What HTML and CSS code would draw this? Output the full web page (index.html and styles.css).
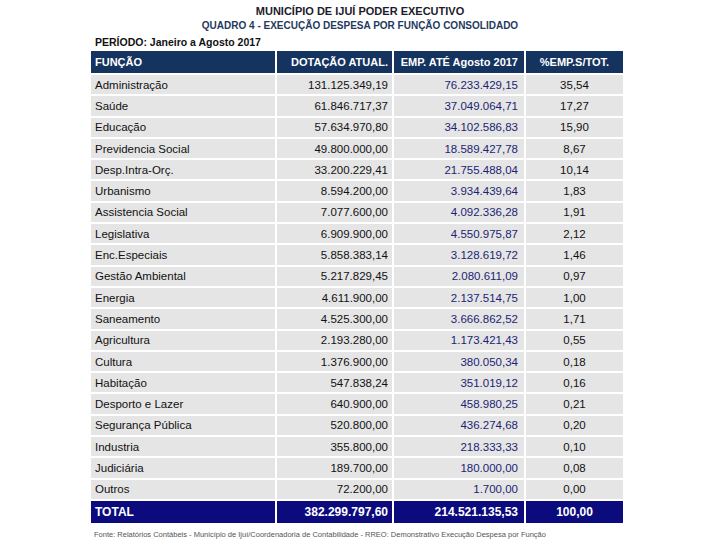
FILE: index.html
```html
<!DOCTYPE html>
<html lang="pt">
<head>
<meta charset="utf-8">
<link rel="stylesheet" href="styles.css">
</head>
<body>
<div class="page">
  <div class="title">MUNICÍPIO DE IJUÍ PODER EXECUTIVO</div>
  <div class="subtitle">QUADRO 4 - EXECUÇÃO DESPESA POR FUNÇÃO CONSOLIDADO</div>
  <div class="period">PERÍODO: Janeiro a Agosto 2017</div>
  <table class="grid">
    <thead>
      <tr><th class="c1">FUNÇÃO</th><th class="c2">DOTAÇÃO ATUAL.</th><th class="c3">EMP. ATÉ Agosto 2017</th><th class="c4">%EMP.S/TOT.</th></tr>
    </thead>
    <tbody>
      <tr><td class="c1">Administração</td><td class="c2">131.125.349,19</td><td class="c3">76.233.429,15</td><td class="c4">35,54</td></tr>
      <tr><td class="c1">Saúde</td><td class="c2">61.846.717,37</td><td class="c3">37.049.064,71</td><td class="c4">17,27</td></tr>
      <tr><td class="c1">Educação</td><td class="c2">57.634.970,80</td><td class="c3">34.102.586,83</td><td class="c4">15,90</td></tr>
      <tr><td class="c1">Previdencia Social</td><td class="c2">49.800.000,00</td><td class="c3">18.589.427,78</td><td class="c4">8,67</td></tr>
      <tr><td class="c1">Desp.Intra-Orç.</td><td class="c2">33.200.229,41</td><td class="c3">21.755.488,04</td><td class="c4">10,14</td></tr>
      <tr><td class="c1">Urbanismo</td><td class="c2">8.594.200,00</td><td class="c3">3.934.439,64</td><td class="c4">1,83</td></tr>
      <tr><td class="c1">Assistencia Social</td><td class="c2">7.077.600,00</td><td class="c3">4.092.336,28</td><td class="c4">1,91</td></tr>
      <tr><td class="c1">Legislativa</td><td class="c2">6.909.900,00</td><td class="c3">4.550.975,87</td><td class="c4">2,12</td></tr>
      <tr><td class="c1">Enc.Especiais</td><td class="c2">5.858.383,14</td><td class="c3">3.128.619,72</td><td class="c4">1,46</td></tr>
      <tr><td class="c1">Gestão Ambiental</td><td class="c2">5.217.829,45</td><td class="c3">2.080.611,09</td><td class="c4">0,97</td></tr>
      <tr><td class="c1">Energia</td><td class="c2">4.611.900,00</td><td class="c3">2.137.514,75</td><td class="c4">1,00</td></tr>
      <tr><td class="c1">Saneamento</td><td class="c2">4.525.300,00</td><td class="c3">3.666.862,52</td><td class="c4">1,71</td></tr>
      <tr><td class="c1">Agricultura</td><td class="c2">2.193.280,00</td><td class="c3">1.173.421,43</td><td class="c4">0,55</td></tr>
      <tr><td class="c1">Cultura</td><td class="c2">1.376.900,00</td><td class="c3">380.050,34</td><td class="c4">0,18</td></tr>
      <tr><td class="c1">Habitação</td><td class="c2">547.838,24</td><td class="c3">351.019,12</td><td class="c4">0,16</td></tr>
      <tr><td class="c1">Desporto e Lazer</td><td class="c2">640.900,00</td><td class="c3">458.980,25</td><td class="c4">0,21</td></tr>
      <tr><td class="c1">Segurança Pública</td><td class="c2">520.800,00</td><td class="c3">436.274,68</td><td class="c4">0,20</td></tr>
      <tr><td class="c1">Industria</td><td class="c2">355.800,00</td><td class="c3">218.333,33</td><td class="c4">0,10</td></tr>
      <tr><td class="c1">Judiciária</td><td class="c2">189.700,00</td><td class="c3">180.000,00</td><td class="c4">0,08</td></tr>
      <tr><td class="c1">Outros</td><td class="c2">72.200,00</td><td class="c3">1.700,00</td><td class="c4">0,00</td></tr>
    </tbody>
    <tfoot>
      <tr><td class="c1">TOTAL</td><td class="c2">382.299.797,60</td><td class="c3">214.521.135,53</td><td class="c4">100,00</td></tr>
    </tfoot>
  </table>
  <div class="source">Fonte: Relatórios Contábeis - Município de Ijuí/Coordenadoria de Contabilidade - RREO: Demonstrativo Execução Despesa por Função</div>
</div>
</body>
</html>
```
FILE: styles.css
```css
html, body {
  margin: 0;
  padding: 0;
  background: #ffffff;
}
body {
  font-family: "Liberation Sans", Arial, sans-serif;
  color: #1a1a1a;
}
.page {
  width: 720px;
  height: 540px;
  overflow: hidden;
  padding-top: 4px;
  box-sizing: border-box;
}
.title {
  text-align: center;
  font-size: 11px;
  font-weight: bold;
  color: #1c1c2c;
  line-height: 14px;
}
.subtitle {
  text-align: center;
  font-size: 10px;
  font-weight: bold;
  color: #1f3a60;
  line-height: 14px;
  margin-top: 1px;
}
.period {
  font-size: 10.5px;
  font-weight: bold;
  color: #111111;
  line-height: 14px;
  margin-top: 2px;
  padding-left: 95px;
}
.grid {
  border-collapse: separate;
  border-spacing: 2px;
  margin-left: 89px;
  margin-top: 0;
  font-size: 11.5px;
  table-layout: fixed;
  width: 536px;
}
.grid th, .grid td {
  padding: 0 4px;
  white-space: nowrap;
  overflow: hidden;
}
.grid .c1 { width: 176px; text-align: left; }
.grid .c2 { width: 107px; text-align: right; }
.grid .c3 { width: 120px; text-align: right; padding-right: 6px; }
.grid .c4 { width: 89px; text-align: center; }
.grid thead th {
  background: #15335f;
  color: #ffffff;
  height: 22px;
  font-size: 11px;
  font-weight: bold;
  text-align: center;
}
.grid thead th.c1 { text-align: left; }
.grid tbody td {
  background: #e5e5e5;
  height: 19.3px;
  color: #111111;
}
.grid tbody td.c3 { color: #1c1f72; }
.grid tfoot td {
  background: #0b0b7e;
  color: #ffffff;
  font-weight: bold;
  height: 22px;
  font-size: 12px;
}
.source {
  font-size: 7.5px;
  color: #555555;
  padding-left: 94px;
  margin-top: 4px;
  line-height: 11px;
}
```
